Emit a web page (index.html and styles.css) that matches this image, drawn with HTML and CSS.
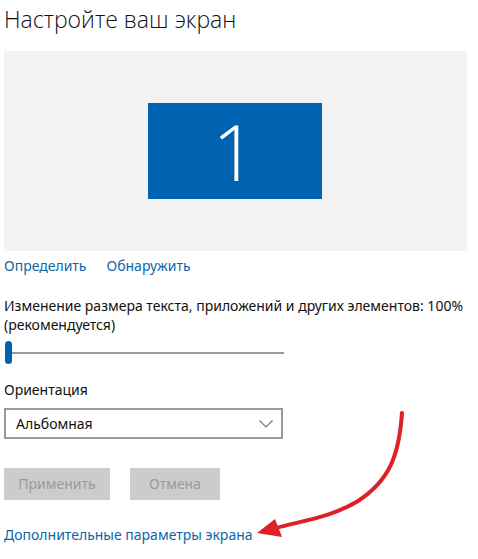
FILE: index.html
```html
<!DOCTYPE html>
<html lang="ru">
<head>
<meta charset="utf-8">
<link rel="stylesheet" href="styles.css">
</head>
<body>
<div class="page">
  <h1 class="title">Настройте ваш экран</h1>
  <div class="preview">
    <div class="monitor">1</div>
  </div>
  <div class="links">
    <a class="link">Определить</a>
    <a class="link">Обнаружить</a>
  </div>
  <p class="scale-label">Изменение размера текста, приложений и других элементов: 100%<br>(рекомендуется)</p>
  <div class="slider">
    <div class="track"></div>
    <div class="thumb"></div>
  </div>
  <p class="label">Ориентация</p>
  <div class="select">
    <span>Альбомная</span>
    <svg class="chev" width="14" height="8" viewBox="0 0 14 8"><path d="M0.5 0.5 L7 7 L13.5 0.5" fill="none" stroke="#777" stroke-width="1.2"/></svg>
  </div>
  <div class="buttons">
    <div class="btn btn-apply">Применить</div>
    <div class="btn btn-cancel">Отмена</div>
  </div>
  <a class="link advanced">Дополнительные параметры экрана</a>
  <svg class="arrow" width="478" height="559" viewBox="0 0 478 559">
    <path d="M402 413 C399 455 390 480 358 501 C330 518 300 521 276 528" fill="none" stroke="#de2127" stroke-width="4" stroke-linecap="round"/>
    <polygon points="257,533 275,519 282,537" fill="#de2127"/>
  </svg>
</div>
</body>
</html>
```
FILE: styles.css
```css
html, body {
  margin: 0;
  padding: 0;
  background: #fff;
}
.page {
  position: relative;
  width: 478px;
  height: 559px;
  overflow: hidden;
  font-family: "Noto Sans", "Open Sans", sans-serif;
  color: #000;
}
.title {
  margin: 0;
  padding: 3px 0 0 4px;
  font-weight: 300;
  font-size: 23px;
  line-height: 32px;
  font-family: "Open Sans", "Noto Sans", sans-serif;
  color: #111;
}
.preview {
  margin: 16px 0 0 4px;
  width: 463px;
  height: 200px;
  background: #f2f2f2;
  display: flex;
  align-items: center;
  justify-content: center;
}
.monitor {
  width: 174px;
  height: 96px;
  background: #0063b1;
  color: #fff;
  font-family: "Open Sans", sans-serif;
  font-weight: 300;
  font-size: 78px;
  line-height: 96px;
  text-align: center;
  margin-left: -2px;
}
.links {
  display: flex;
  gap: 20px;
  padding: 5px 0 0 4px;
  height: 24px;
}
.link {
  color: #0e66a8;
  font-size: 14px;
  line-height: 20px;
  text-decoration: none;
}
.scale-label {
  margin: 16px 0 0 4px;
  font-size: 14px;
  line-height: 19px;
  color: #111;
}
.slider {
  position: relative;
  margin: 7px 0 0 4px;
  width: 280px;
  height: 24px;
}
.track {
  position: absolute;
  left: 4px;
  right: 0;
  top: 11px;
  height: 2px;
  background: #999;
}
.thumb {
  position: absolute;
  left: 1px;
  top: 0;
  width: 7px;
  height: 23px;
  border-radius: 4px;
  background: #0063b1;
}
.label {
  margin: 15px 0 0 4px;
  font-size: 14px;
  line-height: 20px;
  color: #111;
}
.select {
  margin: 8px 0 0 4px;
  height: 27px;
  border: 2px solid #999;
  display: flex;
  align-items: center;
  justify-content: space-between;
  padding: 0 8px 0 10px;
  box-sizing: content-box;
  width: 257px;
  font-size: 14px;
  color: #111;
}
.chev {
  margin-top: 1px;
}
.buttons {
  display: flex;
  gap: 20px;
  margin: 29px 0 0 4px;
}
.btn {
  height: 32px;
  background: #cccccc;
  color: #9a9a9a;
  font-size: 14px;
  line-height: 32px;
  text-align: center;
}
.btn-apply { width: 106px; }
.btn-cancel { width: 90px; }
.advanced {
  display: block;
  margin: 25px 0 0 4px;
}
.arrow {
  position: absolute;
  left: 0;
  top: 0;
  pointer-events: none;
}
```
